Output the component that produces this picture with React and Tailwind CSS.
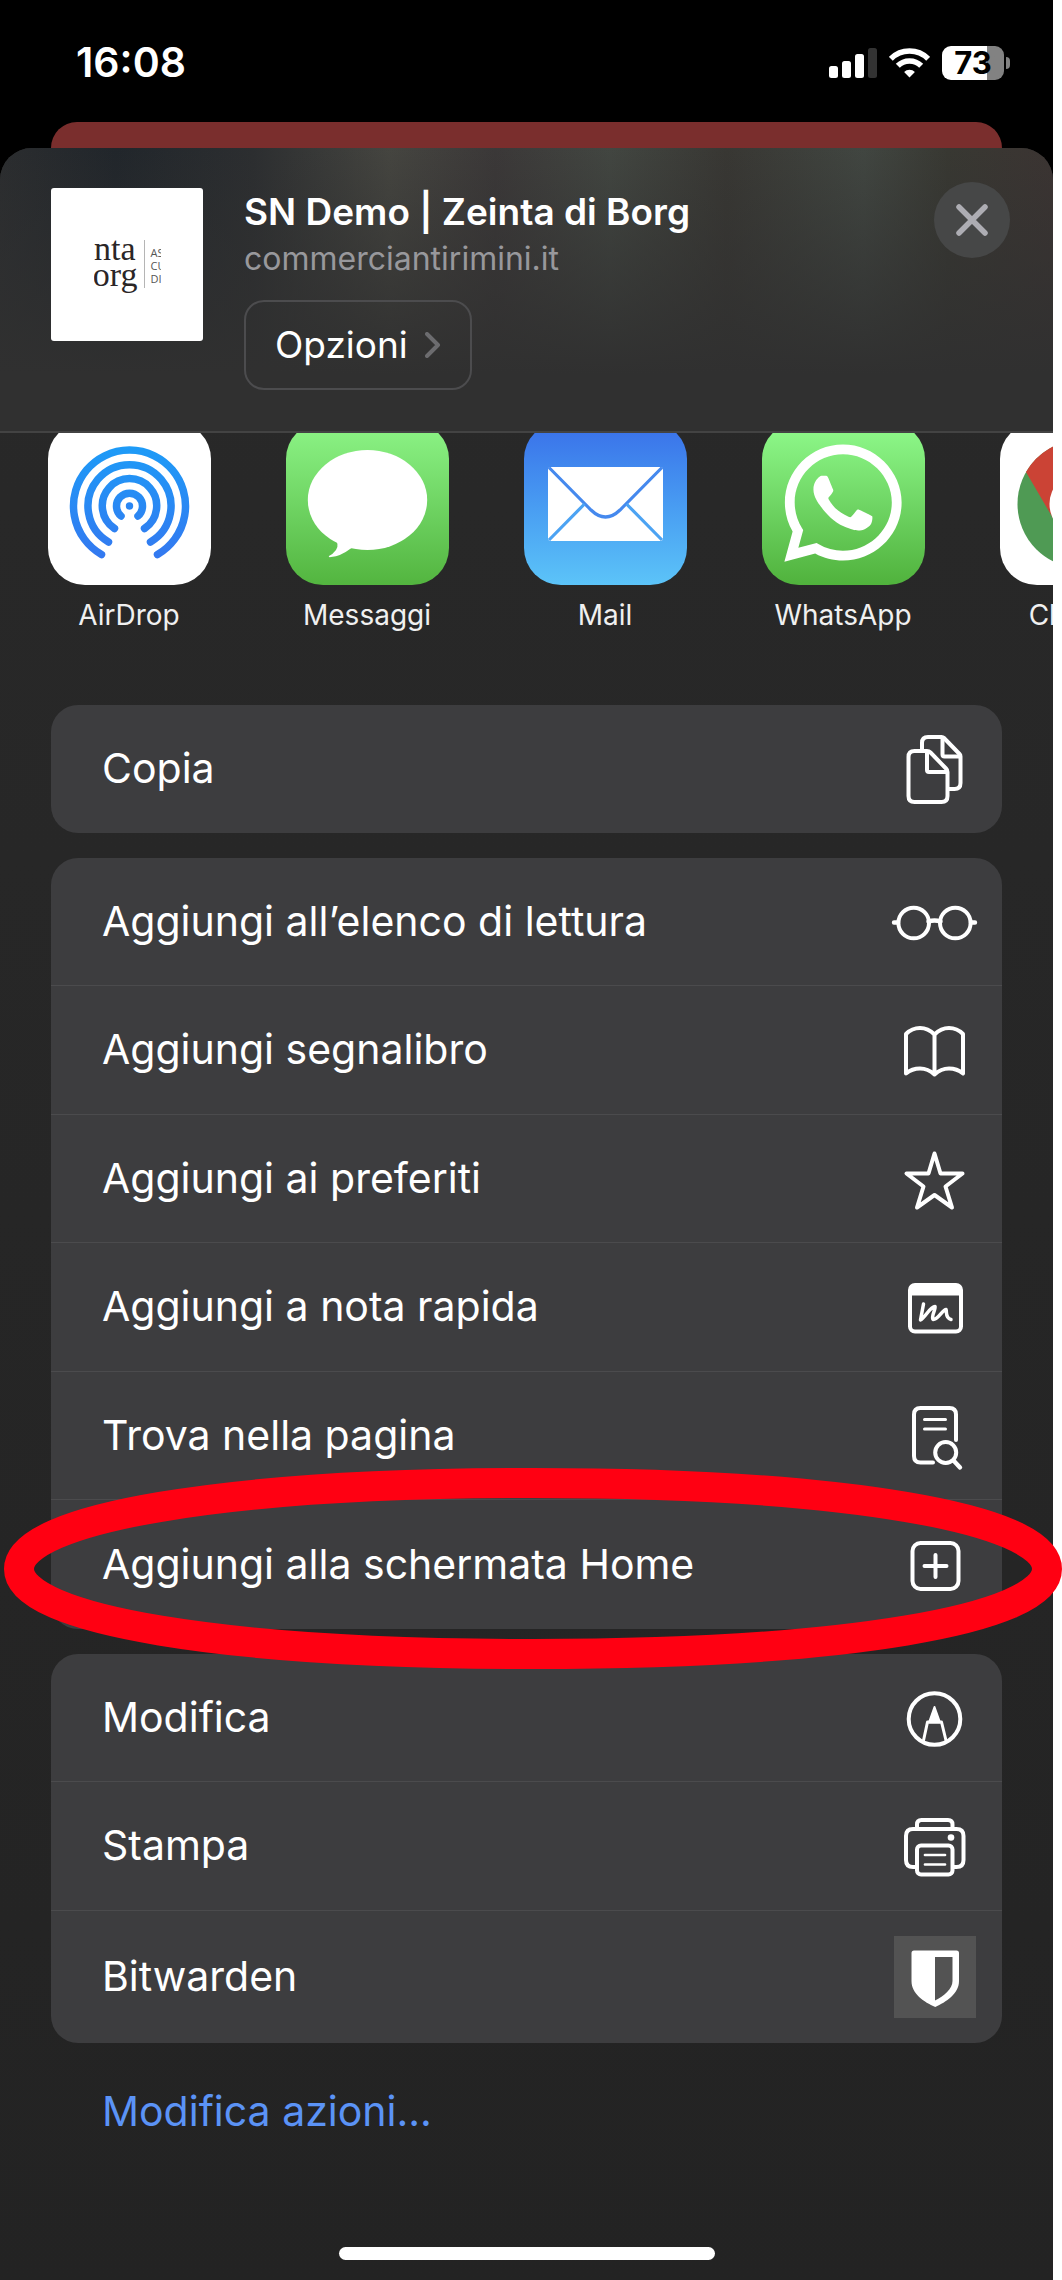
/* =========================================================
 * App.jsx
 * iOS share sheet (dark) with the "add to home screen"
 * action circled.
 * ========================================================= */
import { FaWhatsapp } from "react-icons/fa";

const APPS = [
  { name: "AirDrop", bg: "bg-white", Art: AirDropArt },
  { name: "Messaggi", bg: "bg-linear-to-b from-[#8df587] to-[#53b53f]", Art: MessagesArt },
  { name: "Mail", bg: "bg-linear-to-b from-[#3a6fe9] to-[#5cc4f8]", Art: MailArt },
  { name: "WhatsApp", bg: "bg-linear-to-b from-[#90fb8c] to-[#50b23c]", Art: WhatsAppArt },
  { name: "Chrome", bg: "bg-white", Art: ChromeArt },
];

const GROUPS = [
  [{ label: "Copia", Icon: CopyIcon }],
  [
    { label: "Aggiungi all’elenco di lettura", Icon: GlassesIcon },
    { label: "Aggiungi segnalibro", Icon: BookIcon },
    { label: "Aggiungi ai preferiti", Icon: StarIcon },
    { label: "Aggiungi a nota rapida", Icon: NoteIcon },
    { label: "Trova nella pagina", Icon: FindIcon },
    { label: "Aggiungi alla schermata Home", Icon: PlusIcon, circled: true },
  ],
  [
    { label: "Modifica", Icon: MarkupIcon },
    { label: "Stampa", Icon: PrinterIcon },
    { label: "Bitwarden", Icon: BitwardenIcon, tall: true },
  ],
];

export default function App() {
  return (
    <div className="min-h-screen overflow-x-hidden bg-white pr-[9px] font-['Inter','Liberation_Sans',sans-serif]">
      <div className="flex min-h-screen flex-col bg-black">
        <StatusBar />
        {/* page behind the sheet */}
        <div className="mx-[51px] h-[26px] rounded-t-[26px] bg-[#7a2e2d]" />
        <main className="flex flex-1 flex-col rounded-t-[32px] bg-linear-to-b from-[#292929] to-[#232323]">
          <SheetHeader />
          <AppRow />
          <div className="mx-[51px] mt-[72px] flex flex-col gap-[25px]">
            {GROUPS.map((rows) => (
              <ActionGroup key={rows[0].label} rows={rows} />
            ))}
          </div>
          <button type="button" className="mt-10 ml-[102px] self-start text-[41px] leading-[56px] text-[#5b93f6]">
            Modifica azioni...
          </button>
          <div className="mx-auto mt-auto mb-5 h-[13px] w-[376px] rounded-full bg-white" />
        </main>
      </div>
    </div>
  );
}

function StatusBar() {
  return (
    <header className="flex h-[122px] items-center justify-between pr-[43px] pl-[76px] text-white">
      <span className="pt-1 text-[41px] font-semibold">16:08</span>
      <div className="flex items-center gap-3 pt-1">
        <svg className="h-[30px] w-12" viewBox="0 0 48 30" fill="currentColor">
          <rect x="0" y="18" width="9" height="12" rx="2.5" />
          <rect x="13" y="13" width="9" height="17" rx="2.5" />
          <rect x="26" y="6" width="9" height="24" rx="2.5" />
          <rect x="39" y="0" width="9" height="30" rx="2.5" fill="#333" />
        </svg>
        <svg className="h-[30px] w-[41px]" viewBox="0 0 41 30" fill="none" stroke="currentColor" strokeWidth="5.6">
          <path d="M1.8 10.8A26.4 26.4 0 0 1 39.2 10.8" />
          <path d="M8.8 17.8A16.5 16.5 0 0 1 32.2 17.8" />
          <path d="M20.5 29.5l-5.4-5.4a7.6 7.6 0 0 1 10.8 0z" fill="currentColor" stroke="none" />
        </svg>
        <div className="flex items-center gap-0.5">
          <div className="flex h-[34px] w-[62px] items-center justify-center rounded-[9px] bg-linear-to-r from-white from-73% to-[#828282] to-73% text-[31px] font-bold text-black">
            73
          </div>
          <div className="h-3 w-1 rounded-r-full bg-[#828282]" />
        </div>
      </div>
    </header>
  );
}

function SheetHeader() {
  return (
    <section className="flex items-start rounded-t-[32px] border-b-2 border-[#434343] bg-[linear-gradient(to_bottom,transparent,#303030_80%),linear-gradient(to_right,#2b2d2f,#21262b_11%,#2c2e30_24%,#454540_37%,#3b3838_47%,#424641_58%,#383733_69%,#414641_82%,#383832_90%,#3b3432)] pt-[34px] pr-[43px] pb-[41px] pl-[51px]">
      <div className="mt-1.5 flex h-[153px] w-[152px] shrink-0 items-center justify-center rounded-[3px] bg-white text-[#2a2627]">
        {/* site logo, cropped by the preview */}
        <div className="flex h-[58px] w-[67px] items-start gap-1.5 overflow-hidden">
          <div className="flex w-11 shrink-0 flex-col items-end font-['Liberation_Serif',serif] text-[34px] leading-[26px]">
            <span className="pr-0.5">nta</span>
            <span>borg</span>
          </div>
          <div className="mt-1 h-12 w-px shrink-0 bg-[#b5b5b5]" />
          <div className="mt-2.5 shrink-0 font-['Open_Sans',sans-serif] text-[11px] leading-[13px] text-[#555]">
            <p>AS</p>
            <p>CU</p>
            <p>DI</p>
          </div>
        </div>
      </div>
      <div className="ml-[41px] flex-1">
        <h1 className="mt-[7px] text-[37px] leading-[46px] font-semibold text-white">SN Demo | Zeinta di Borg</h1>
        <p className="text-[32px] leading-[48px] text-[#98989c]">commerciantirimini.it</p>
        <button
          type="button"
          className="mt-[17px] flex h-[90px] items-center gap-[17px] rounded-[20px] border-2 border-[#4c4c4e] px-[29px] text-[37px] text-white"
        >
          Opzioni
          <svg className="h-[26px] w-4" viewBox="0 0 16 26" fill="none" stroke="#6c6c6f" strokeWidth="4" strokeLinecap="round" strokeLinejoin="round">
            <path d="M2 2l11 11L2 24" />
          </svg>
        </button>
      </div>
      <button
        type="button"
        aria-label="Chiudi"
        className="flex size-[76px] items-center justify-center rounded-full bg-[#464747] text-[#adadb3]"
      >
        <svg className="size-8" viewBox="0 0 32 32" fill="none" stroke="currentColor" strokeWidth="5.5" strokeLinecap="round">
          <path d="M3 3l26 26M29 3L3 29" />
        </svg>
      </button>
    </section>
  );
}

function AppRow() {
  return (
    <section className="flex gap-[38px] overflow-hidden pl-[29px]">
      {APPS.map(({ name, bg, Art }) => (
        <button key={name} type="button" className="-mt-[11px] flex w-[200px] shrink-0 flex-col items-center">
          <span className={`size-[163px] rounded-[37px] ${bg}`}>
            <Art />
          </span>
          <span className="mt-3 text-[28px] leading-9 text-[#f0f0f0]">{name}</span>
        </button>
      ))}
    </section>
  );
}

function ActionGroup({ rows }) {
  return (
    <ul className="divide-y divide-[#4b4b4d] rounded-[27px] bg-[#3d3d3f]">
      {rows.map(({ label, Icon, circled, tall }) => (
        <li key={label} className={tall ? "h-[132px]" : "relative h-32 even:h-[129px]"}>
          <button
            type="button"
            className="flex size-full items-center justify-between pr-[26px] pl-[51px] text-left text-[41px] text-white"
          >
            {label}
            <Icon />
          </button>
          {circled && <RedCircle />}
        </li>
      ))}
    </ul>
  );
}

/* marker ring, wider than the sheet on both sides */
function RedCircle() {
  return (
    <div className="pointer-events-none absolute -top-8 -right-[60px] -left-[51px] z-10">
      <svg className="h-[202px] w-full" viewBox="0 0 1062 202" preserveAspectRatio="none" fill="none">
        <path
          d="M1047 101C1047 152 841 186 533 186S19 152 19 101S225 15 533 15S1047 50 1047 101Z"
          stroke="#ff0012"
          strokeWidth="30"
        />
      </svg>
    </div>
  );
}

/* ---------- action icons, 82px box ---------- */
function Glyph({ children }) {
  return (
    <svg
      className="size-[82px] shrink-0 overflow-visible"
      viewBox="0 0 82 82"
      fill="none"
      stroke="#fff"
      strokeWidth="4"
      strokeLinecap="round"
      strokeLinejoin="round"
      aria-hidden="true"
    >
      {children}
    </svg>
  );
}

function CopyIcon() {
  return (
    <Glyph>
      <path d="M28 21V15Q28 9 34 9H47.5Q49 9 50 10L65.5 26Q66.5 27 66.5 28.5V55Q66.5 61 60.5 61H55" />
      <path d="M48.5 10V26.5Q48.5 28.5 50.5 28.5H65" />
      <path d="M20.5 23H33Q35 23 36.5 24.5L52 40.5Q53.5 42 53.5 44V68Q53.5 74 47.5 74H20.5Q14.5 74 14.5 68V29Q14.5 23 20.5 23Z" />
      <path d="M33 24V42Q33 44 35 44H52" />
    </Glyph>
  );
}

function GlassesIcon() {
  return (
    <Glyph>
      <circle cx="19.7" cy="42" r="15.3" />
      <circle cx="61.3" cy="42" r="15.3" />
      <path d="M34.5 40.5Q40.5 38.5 46.5 40.5M0 41.5H4M77 41.5H81" strokeWidth="4.4" />
    </Glyph>
  );
}

function BookIcon() {
  return (
    <Glyph>
      <path d="M40.5 25.5Q34 19 26 19T12 25V64.5Q18 59.5 26 59.5T40.5 65.5Q47 59.5 55 59.5T69 64.5V25Q63 19 55 19T40.5 25.5V65" />
    </Glyph>
  );
}

function StarIcon() {
  return (
    <Glyph>
      <path d="M40.5 15.5L46.5 35.5H68.5L51.5 48.5L58 69.5L40.5 57L23 69.5L29.5 48.5L12.5 35.5H34.5Z" />
    </Glyph>
  );
}

function NoteIcon() {
  return (
    <Glyph>
      <rect x="16" y="19" width="51" height="46.5" rx="5" />
      <path d="M15 30V24Q15 18 21 18H62Q68 18 68 24V30Q67 29.5 65 29.5H18Q16 29.5 15 30Z" fill="#fff" stroke="none" />
      <path d="M29.5 38Q28 46 26.5 54C31 52 36 40.5 41 40.5C42 43 37 50 39 53.5C44 54 49 43 52 43.5C53 46 51 52 57 53.5" strokeWidth="3.5" />
    </Glyph>
  );
}

function FindIcon() {
  return (
    <Glyph>
      <path d="M62 45V19.5Q62 13 55.5 13H26.5Q20 13 20 19.5V61Q20 67.5 26.5 67.5H39" />
      <path d="M30.5 24.5H51.5M30.5 34H51.5" strokeWidth="3" />
      <circle cx="51.7" cy="57.5" r="10.5" />
      <path d="M59.5 65.5L66 72.5" strokeWidth="4.4" />
    </Glyph>
  );
}

function PlusIcon() {
  return (
    <Glyph>
      <rect x="18.5" y="19" width="46" height="46" rx="8" />
      <path d="M41.5 31V53M30.5 42H52.5" />
    </Glyph>
  );
}

function MarkupIcon() {
  return (
    <Glyph>
      <circle cx="40.5" cy="42" r="25.8" />
      <path d="M40.5 30L46 45.5H35Z" fill="#fff" strokeWidth="2" />
      <path d="M29.5 63.5L33.5 45H47.5L52 63.5" strokeWidth="3" />
    </Glyph>
  );
}

function PrinterIcon() {
  return (
    <Glyph>
      <path d="M22.5 62H19Q12 62 12 55V31Q12 24 19 24H62.5Q69.5 24 69.5 31V55Q69.5 62 62.5 62H59" />
      <path d="M23 23V19.5Q23 15 27.5 15H54Q58.5 15 58.5 19.5V23" />
      <rect x="23" y="40.5" width="35.5" height="29" rx="4" />
      <path d="M31 50H51M31 59.5H51" strokeWidth="2.7" />
      <circle cx="57" cy="32.5" r="3.3" fill="#fff" stroke="none" />
    </Glyph>
  );
}

function BitwardenIcon() {
  return (
    <Glyph>
      <rect width="82" height="82" fill="#535353" stroke="none" />
      <path
        fill="#fff"
        fillRule="evenodd"
        stroke="none"
        d="M20 14.5H62.5Q65 14.5 65 17V45C65 58 52 66 41.3 71C30 66 17.5 58 17.5 45V17Q17.5 14.5 20 14.5ZM41 21V64.5C50 60 58.5 53 58.5 45V21Z"
      />
    </Glyph>
  );
}

/* ---------- app artwork, 163px box ---------- */
function AirDropArt() {
  return (
    <svg viewBox="0 0 163 163" fill="none" stroke="url(#airdrop)" strokeWidth="7.5" strokeLinecap="round">
      <defs>
        <linearGradient id="airdrop" gradientUnits="userSpaceOnUse" x1="0" y1="25" x2="0" y2="138">
          <stop stopColor="#1d9bf7" />
          <stop offset="1" stopColor="#3478f0" />
        </linearGradient>
      </defs>
      <path d="M53.5 132.5A56 56 0 1 1 109.5 132.5" />
      <path d="M60.5 120A41.5 41.5 0 1 1 102.5 120" />
      <path d="M66.5 106.5A27.2 27.2 0 1 1 96.5 106.5" />
      <path d="M73 94A13 13 0 1 1 90 94" />
      <circle cx="81.5" cy="84" r="3.7" fill="#2a86f3" stroke="none" />
    </svg>
  );
}

function MessagesArt() {
  return (
    <svg viewBox="0 0 163 163" fill="#fff">
      <ellipse cx="81.5" cy="78" rx="59.7" ry="50" />
      <path d="M48 117Q54 122 50 128Q47 132 43 134Q42 135.5 45 135Q55 134 64 127L72 122Z" />
    </svg>
  );
}

function MailArt() {
  return (
    <svg viewBox="0 0 163 163" fill="none">
      <rect x="24" y="45" width="115" height="74" rx="3" fill="#fff" />
      <g strokeWidth="3.2">
        <path d="M25 45.5L67 88Q81.5 102 96 88L138 45.5" stroke="#4589ee" />
        <path d="M25 118L60.5 82M138 118L102.5 82" stroke="#4ca3f3" />
      </g>
    </svg>
  );
}

function WhatsAppArt() {
  return (
    <span className="flex h-full items-start justify-center pt-3.5">
      <FaWhatsapp className="h-[134px] w-[118px] text-white" />
    </span>
  );
}

function ChromeArt() {
  return (
    <svg viewBox="0 0 163 163">
      <circle cx="81.5" cy="82" r="64" fill="#4f9a54" />
      <path d="M26 50A64 64 0 0 1 137 50H81.5V82L54 98Z" fill="#cb4335" />
      <path d="M81.5 50H137A64 64 0 0 1 81.5 146L109 98Z" fill="#f7cd46" />
      <circle cx="81.5" cy="82" r="32" fill="#fff" />
      <circle cx="81.5" cy="82" r="25" fill="#4c8bf5" />
    </svg>
  );
}
